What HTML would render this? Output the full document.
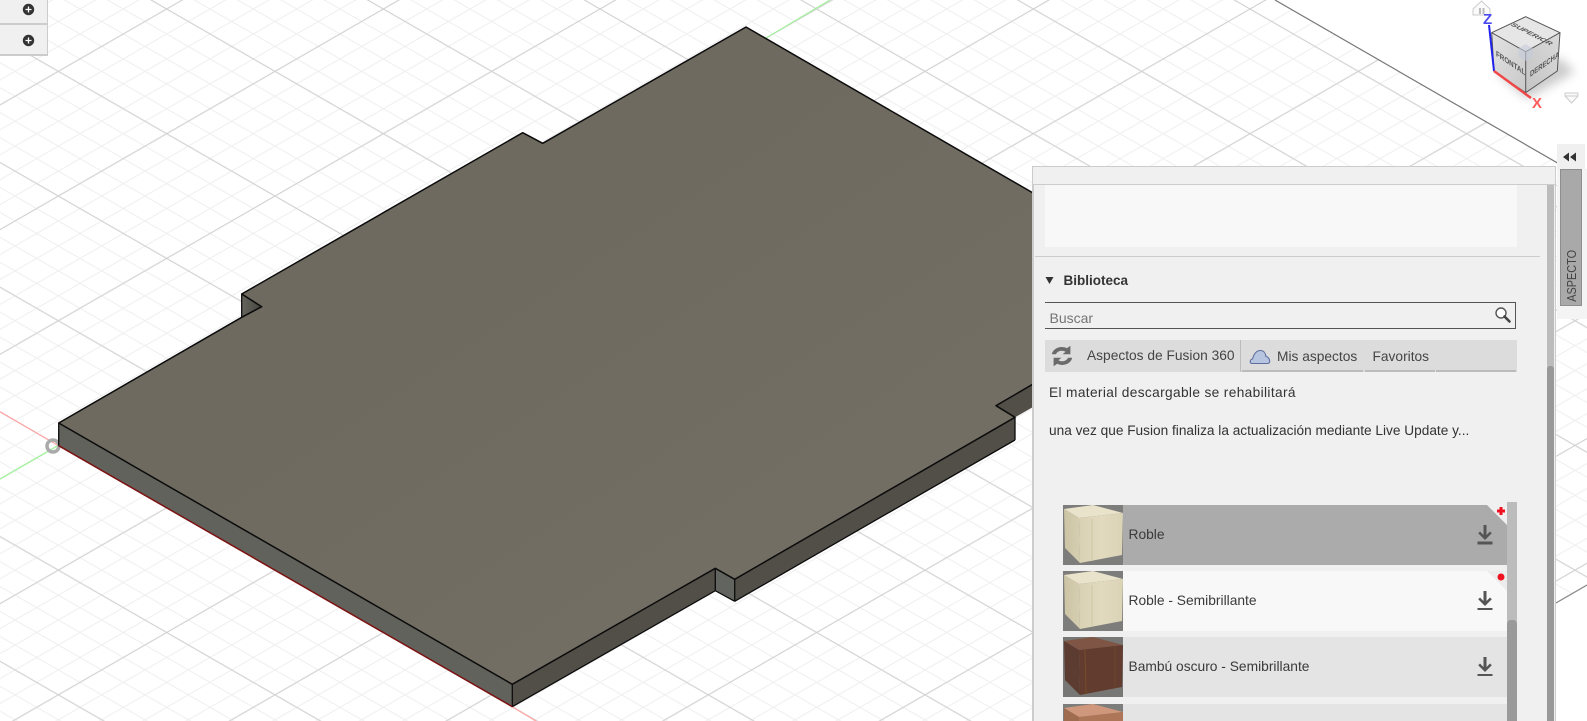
<!DOCTYPE html>
<html><head><meta charset="utf-8"><style>
html,body{margin:0;padding:0;width:1587px;height:721px;overflow:hidden;background:#fff}
#r{position:relative;width:1587px;height:721px;overflow:hidden;font-family:"Liberation Sans",sans-serif;color:#333}
#r>*,.a{position:absolute}
.t{white-space:nowrap;line-height:16px;font-size:13.6px;color:#3a3a3a}
.row{left:1063px;width:444px;height:60px}
</style></head><body><div id="r">
<svg width="1587" height="721" style="left:0;top:0">
<defs>
<pattern id="mn" patternUnits="userSpaceOnUse" width="43.333" height="24.94" patternTransform="translate(166.67 9)"><path d="M0 0L43.333 24.94M0 24.94L43.333 0" stroke="#efefef" stroke-width="1" fill="none"/></pattern>
<pattern id="mj" patternUnits="userSpaceOnUse" width="216.667" height="124.7" patternTransform="translate(166.67 9)"><path d="M0 0L216.667 124.7M0 124.7L216.667 0" stroke="#d2d2d2" stroke-width="1.1" fill="none"/></pattern>
<clipPath id="gc"><polygon points="0,0 1275,0 1587,180 1587,585 1352,721 0,721"/></clipPath>
<linearGradient id="tp" x1="0" y1="0" x2="1" y2="1"><stop offset="0" stop-color="#6b675d"/><stop offset=".5" stop-color="#6f6b61"/><stop offset="1" stop-color="#757167"/></linearGradient>
<linearGradient id="nt" x1="0" y1="0" x2="1" y2="0"><stop offset="0" stop-color="#66665f"/><stop offset="1" stop-color="#45453f"/></linearGradient>
<linearGradient id="cl" x1="0" y1="0" x2="1" y2="1"><stop offset="0" stop-color="#e2e2e2"/><stop offset="1" stop-color="#c9c9c9"/></linearGradient>
<linearGradient id="cr" x1="0" y1="1" x2="1" y2="0"><stop offset="0" stop-color="#c4c4c4"/><stop offset="1" stop-color="#dadada"/></linearGradient>
</defs>
<g clip-path="url(#gc)"><rect width="1587" height="721" fill="url(#mn)"/><rect width="1587" height="721" fill="url(#mj)"/></g>
<path d="M1275 0L1587 180" stroke="#777" stroke-width="1.2"/>
<path d="M1587 585L1352 721" stroke="#888" stroke-width="1.2"/>
<path d="M0 411.7L59 446" stroke="#ffa8a8" stroke-width="1.3"/>
<path d="M512 706.7L536 721" stroke="#ffa8a8" stroke-width="1.3"/>
<path d="M0 479L59 445M766 38L830 0" stroke="#a6f2a0" stroke-width="1.3"/>
<circle cx="53" cy="446" r="6" fill="none" stroke="#aaa" stroke-width="3.500"/>
<!-- side faces -->
<polygon points="58.7,423 512.3,684.3 512.3,706.7 58.7,445.7" fill="#62625c"/>
<polygon points="512.3,684.3 715.3,568.3 715.3,590.7 512.3,706.7" fill="#524f48"/>
<polygon points="715.3,568.3 734.7,579.3 734.7,601.3 715.3,590.7" fill="#62645f"/>
<polygon points="734.7,579.3 1015,417.3 1015,440 734.7,601.3" fill="#524f48"/>
<polygon points="996,405.7 1040,380 1040,403 1015,417.3" fill="#524f48"/>
<polygon points="241.7,294 261.7,306.7 241.7,317.3" fill="url(#nt)"/>
<!-- top -->
<polygon points="58.7,423 241.7,317.3 261.7,306.7 241.7,294 522.7,132.7 542.7,143.3 746,27 1040,197 1040,380 996,405.7 1015,417.3 734.7,579.3 715.3,568.3 512.3,684.3" fill="url(#tp)"/>
<path d="M1040 197L746 27 542.7 143.3 522.7 132.7 241.7 294 261.7 306.7 241.7 317.3 58.7 423 512.3 684.3 715.3 568.3 734.7 579.3 1015 417.3 996 405.7 1040 380" fill="none" stroke="#0c0c0c" stroke-width="1.5" stroke-linejoin="round"/>
<path d="M58.7 423V445.7M241.7 294V317.3M512.3 684.3V706.7M715.3 568.3V590.7M734.7 579.3V601.3M1015 417.3V440M734.7 601.3L1015 440M512.3 706.7L715.3 590.7 734.7 601.3" fill="none" stroke="#0c0c0c" stroke-width="1.3"/>
<path d="M58.7 445.7L512.3 706.7" stroke="#7c1212" stroke-width="1.5"/>
<!-- view cube -->
<polygon points="1496,72 1527,99 1575,72 1560,58" fill="#999" opacity=".5" style="filter:blur(5px)"/>
<path d="M1473 9L1481.500 1 1490 9V15H1473Z" fill="#fafafa" stroke="#ccc" stroke-width="1"/>
<path d="M1479 14V8h2v6zM1482.500 14V8h2v6z" fill="#bbb"/>
<polygon points="1525.700,16.700 1560,32.700 1525.700,51.700 1491.700,32.700" fill="#e6e6e6"/>
<polygon points="1491.700,32.700 1525.700,51.700 1525.700,92.700 1494,71" fill="url(#cl)"/>
<polygon points="1525.700,51.700 1560,32.700 1557.300,71 1525.700,92.700" fill="url(#cr)"/>
<path d="M1525.700 16.700L1560 32.700 1557.300 71 1525.700 92.700 1494 71 1491.700 32.700ZM1491.700 32.700L1525.700 51.700 1560 32.700M1525.700 51.700V92.700" fill="none" stroke="#555" stroke-width="1"/>
<polygon points="1525.700,44 1533,48.500 1533,57 1525.700,61 1518.500,57 1518.500,48.500" fill="#c4ccd8" opacity=".6"/>
<text transform="matrix(.9 .46 -.7 .38 1510 25)" font-size="8.500" font-weight="bold" fill="#555" font-family="Liberation Sans">SUPERIOR</text>
<text transform="matrix(.78 .52 0 1 1496 56)" font-size="8" font-weight="bold" fill="#555" font-family="Liberation Sans">FRONTAL</text>
<text transform="matrix(.74 -.52 0 1 1530 77)" font-size="8" font-weight="bold" fill="#555" font-family="Liberation Sans">DERECHA</text>
<path d="M1489 25L1494 71" stroke="#2222ee" stroke-width="2"/>
<path d="M1494 71L1531 98" stroke="#f04848" stroke-width="2.500"/>
<text x="1483" y="24" font-size="15" font-weight="bold" fill="#4a4af0" font-family="Liberation Sans">Z</text>
<text x="1532" y="108" font-size="15" font-weight="bold" fill="#ff5c5c" font-family="Liberation Sans">X</text>
<path d="M1565 93H1578V96L1571.500 103 1565 96ZM1565 96H1578" fill="#fafafa" stroke="#ccc" stroke-width="1"/>
</svg>

<!-- left buttons -->
<div style="left:0;top:0;width:47px;height:23px;background:#f0f0f0;border-right:1px solid #ccc;border-bottom:2px solid #ccc"></div>
<div style="left:0;top:25px;width:47px;height:29px;background:#f0f0f0;border-right:1px solid #ccc;border-bottom:2px solid #ccc"></div>
<svg width="50" height="56" style="left:0;top:0"><g fill="#333"><circle cx="28.500" cy="9.500" r="5.700"/><circle cx="28.500" cy="40.500" r="5.700"/></g><path d="M25.500 9.500H31.500M28.500 6.500V12.500M25.500 40.500H31.500M28.500 37.500V43.500" stroke="#fff" stroke-width="1.300"/></svg>

<!-- side tab -->
<div style="left:1557px;top:144px;width:28px;height:25px;background:#f0f0f0"></div>
<div style="left:1557px;top:169px;width:30px;height:150px;background:#f4f4f4"></div>
<div style="left:1560px;top:169px;width:20px;height:135px;background:#a9a9a9;border:1px solid #8e8e8e;overflow:hidden"></div>
<svg width="14" height="10" style="left:1563px;top:152px"><path d="M0 5L6 .5V9.500ZM7 5L13 .5V9.500Z" fill="#333"/></svg>
<div class="t" style="left:1547px;top:272px;width:50px;height:16px;font-size:12.500px;color:#444;transform:rotate(-90deg) scaleX(.87);text-align:center">ASPECTO</div>

<!-- panel -->
<div style="left:1032px;top:166px;width:524px;height:555px;background:#f0f0f0;border-left:2px solid #ccc;border-right:1px solid #ccc;box-sizing:border-box"></div>
<div style="left:1032px;top:166px;width:524px;height:19px;background:#f0f0f0;border:1px solid #ccc;box-sizing:border-box"></div>
<div style="left:1044.500px;top:185px;width:472.500px;height:62px;background:#f8f8f8"></div>
<div style="left:1546.500px;top:185px;width:7px;height:536px;background:#bcbcbc"></div>
<div style="left:1546.500px;top:366px;width:7px;height:355px;background:#999;border-radius:3px 3px 0 0"></div>
<div style="left:1035px;top:256px;width:505px;height:1px;background:#ccc"></div>

<svg width="10" height="8" style="left:1045px;top:277px"><path d="M.5 0H8.500L4.500 7Z" fill="#333"/></svg>
<div class="t" style="left:1063.500px;top:273px;font-weight:bold;font-size:13.500px;color:#333">Biblioteca</div>

<div style="left:1044.500px;top:302px;width:471px;height:27px;border:solid #555;border-width:1px 1px 1px 0;box-sizing:border-box"></div>
<div class="t" style="left:1049.500px;top:310px;color:#757575;font-size:14px">Buscar</div>
<svg width="18" height="18" style="left:1494px;top:306px"><circle cx="7" cy="7" r="5" fill="#fff" stroke="#555" stroke-width="1.400"/><path d="M10.500 10.500L15.500 15.500" stroke="#444" stroke-width="2.600" stroke-linecap="round"/></svg>

<div style="left:1044.500px;top:340px;width:472.500px;height:32px;background:#dcdcdc"></div>
<div style="left:1240px;top:340px;width:1px;height:32px;background:#bbb"></div>
<div style="left:1242px;top:370px;width:121px;height:2px;background:#bbb"></div>
<div style="left:1365px;top:370px;width:70px;height:2px;background:#bbb"></div>
<div style="left:1436px;top:370px;width:80px;height:2px;background:#bbb"></div>
<svg width="24" height="24" viewBox="2 2 20 20" style="left:1050px;top:344px"><path d="M3.500 10.500C4.500 5.500 11 3 16 5.500L19 3.500V10.500H12.500L15 8.500C11.500 6.500 8 8 7 10.500ZM20.500 13.500C19.500 18.500 13 21 8 18.500L5 20.500V13.500H11.500L9 15.500C12.500 17.500 16 16 17 13.500Z" fill="#6a6a6a"/></svg>
<div class="t" style="left:1087px;top:348px;font-size:13.750px;color:#444">Aspectos de Fusion 360</div>
<svg width="24" height="18" style="left:1249px;top:348px"><path d="M3 15.500C.5 15.500 .5 11.500 3.500 11C5 5.500 8 2.500 11.500 2.500 14.500 2.500 16.500 5 17 8.500 20.500 9 22.500 15.500 18.500 15.500Z" fill="#b7c5e0" stroke="#5e6f9f" stroke-width="1.100"/></svg>
<div class="t" style="left:1277px;top:349px;font-size:13.750px;color:#444">Mis aspectos</div>
<div class="t" style="left:1372.500px;top:349px;font-size:13.750px;color:#444">Favoritos</div>

<div class="t" style="left:1049px;top:385px;font-size:13.700px;letter-spacing:.36px;color:#333">El material descargable se rehabilitará</div>
<div class="t" style="left:1049px;top:423px;font-size:13.660px;color:#333">una vez que Fusion finaliza la actualización mediante Live Update y...</div>

<!-- list -->
<div style="left:1507px;top:502px;width:10px;height:219px;background:#bcbcbc"></div>
<div style="left:1507px;top:620px;width:10px;height:101px;background:#9a9a9a;border-radius:4px 4px 0 0"></div>
<div class="row" style="top:505px;background:#ababab"></div>
<div class="row" style="top:571px;background:#f8f8f8"></div>
<div class="row" style="top:637px;background:#e4e4e4"></div>
<div class="row" style="top:704px;height:17px;background:#e4e4e4"></div>
<svg width="20" height="20" style="left:1487px;top:505px"><path d="M0 0H20V20Z" fill="#f0f0f0"/></svg>
<svg width="20" height="20" style="left:1487px;top:571px"><path d="M0 0H20V20Z" fill="#ececec"/></svg>
<svg width="10" height="10" style="left:1496px;top:506px"><path d="M3.500 1H6.500V3.500H9V6.500H6.500V9H3.500V6.500H1V3.500H3.500Z" fill="#f01020"/></svg>
<svg width="10" height="10" style="left:1496px;top:572px"><circle cx="5" cy="5" r="3.500" fill="#f01020"/></svg>

<svg width="60" height="222" style="left:1063px;top:505px">
<defs>
<linearGradient id="w1" x1="0" x2="1" y1="0" y2="0"><stop offset="0" stop-color="#d9d1b3"/><stop offset=".5" stop-color="#e2dabf"/><stop offset="1" stop-color="#dbd3b6"/></linearGradient>
<linearGradient id="w2" x1="0" x2="1" y1="0" y2="0"><stop offset="0" stop-color="#cbc3a4"/><stop offset="1" stop-color="#d6ceb0"/></linearGradient>
<g id="oak"><rect width="60" height="60" fill="#7d7d7b"/><polygon points="1,4 30,0 60,8 16,13" fill="#e9e3cc"/><polygon points="1,4 16,13 17,58 2,43" fill="url(#w2)"/><polygon points="16,13 60,8 59,50 17,58" fill="url(#w1)"/><path d="M29 14V56" stroke="#d3caab" stroke-width="2" opacity=".6"/></g>
</defs>
<use href="#oak"/>
<use href="#oak" y="66"/>
<g transform="translate(0 132)"><rect width="60" height="60" fill="#777775"/><polygon points="1,4 30,0 60,8 16,13" fill="#7f5646"/><polygon points="1,4 16,13 17,58 2,43" fill="#5c3b30"/><polygon points="16,13 60,8 59,50 17,58" fill="#623c2f"/><path d="M22 13L23 57" stroke="#7d5226" stroke-width="1" opacity=".8"/><path d="M52 9L52 51" stroke="#74492c" stroke-width="1" opacity=".7"/></g>
<g transform="translate(0 199)"><rect width="60" height="23" fill="#7d7d7b"/><polygon points="1,4 30,0 60,8 16,13" fill="#cf987c"/><polygon points="1,4 16,13 16,23 1,23" fill="#a06c50"/><polygon points="16,13 60,8 60,23 16,23" fill="#ad7658"/></g>
</svg>

<div class="t" style="left:1128.500px;top:527px;font-size:13.800px">Roble</div>
<div class="t" style="left:1128.500px;top:593px;font-size:13.800px">Roble - Semibrillante</div>
<div class="t" style="left:1128.500px;top:659px;font-size:13.800px">Bambú oscuro - Semibrillante</div>

<svg width="16" height="22" style="left:1476.500px;top:524px"><path d="M6.500 1H9.500V11L13 7.500 14.800 9.300 8 16 1.200 9.300 3 7.500 6.500 11Z" fill="#555"/><rect x=".5" y="17.500" width="15" height="3" fill="#555"/></svg>
<svg width="16" height="22" style="left:1476.500px;top:590px"><path d="M6.500 1H9.500V11L13 7.500 14.800 9.300 8 16 1.200 9.300 3 7.500 6.500 11Z" fill="#555"/><rect x=".5" y="18" width="15" height="2" fill="#555"/></svg>
<svg width="16" height="22" style="left:1476.500px;top:656px"><path d="M6.500 1H9.500V11L13 7.500 14.800 9.300 8 16 1.200 9.300 3 7.500 6.500 11Z" fill="#555"/><rect x=".5" y="18" width="15" height="2" fill="#555"/></svg>
</div></body></html>
